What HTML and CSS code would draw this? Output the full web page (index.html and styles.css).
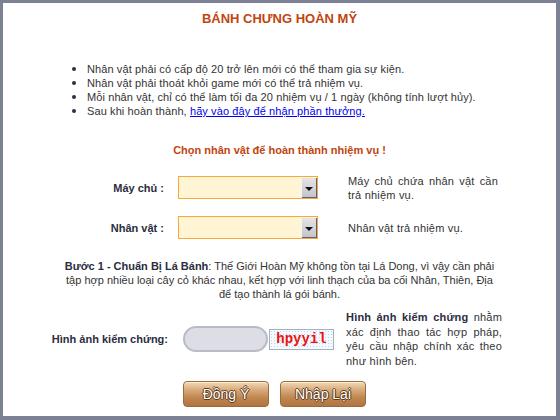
FILE: index.html
```html
<!DOCTYPE html>
<html lang="vi">
<head>
  <meta charset="UTF-8">
  <meta name="viewport" content="width=device-width, initial-scale=1.0">
  <title>Bánh Chưng Hoàn Mỹ</title>
  <link rel="stylesheet" href="styles.css">
</head>
<body>

  <div class="frame">
    <h1 class="title">BÁNH CHƯNG HOÀN MỸ</h1>

    <ul class="rules">
      <li>Nhân vật phải có cấp độ 20 trở lên mới có thể tham gia sự kiện.</li>
      <li>Nhân vật phải thoát khỏi game mới có thể trả nhiệm vụ.</li>
      <li>Mỗi nhân vật, chỉ có thể làm tối đa 20 nhiệm vụ / 1 ngày (không tính lượt hủy).</li>
      <li>Sau khi hoàn thành, <a href="#">hãy vào đây để nhận phần thưởng.</a></li>
    </ul>

    <h2 class="pick">Chọn nhân vật để hoàn thành nhiệm vụ !</h2>

    <div class="form-grid">
      <label class="label" for="server">Máy chủ :</label>
      <div class="combo" id="server"><span class="arrow"></span></div>
      <p class="hint">Máy chủ chứa nhân vật cần trả nhiệm vụ.</p>

      <label class="label" for="char">Nhân vật :</label>
      <div class="combo" id="char"><span class="arrow"></span></div>
      <p class="hint">Nhân vật trả nhiệm vụ.</p>
    </div>

    <p class="step"><b>Bước 1 - Chuẩn Bị Lá Bánh</b>: Thế Giới Hoàn Mỹ không tồn tại Lá Dong, vì vậy cần phải tập hợp nhiều loại cây cỏ khác nhau, kết hợp với linh thạch của ba cối Nhân, Thiên, Địa để tạo thành lá gói bánh.</p>

    <div class="captcha-row">
      <label class="label" for="code">Hình ảnh kiểm chứng:</label>
      <div class="captcha">
        <input type="text" id="code" class="pill">
        <span class="captcha-img">hpyyil</span>
      </div>
      <p class="hint hint-long"><b>Hình ảnh kiểm chứng</b> nhằm xác định thao tác hợp pháp, yêu cầu nhập chính xác theo như hình bên.</p>
    </div>

    <div class="buttons">
      <button class="btn">Đồng Ý</button>
      <button class="btn">Nhập Lại</button>
    </div>
  </div>

</body>
</html>
```

FILE: styles.css
```css
body {
  margin: 0;
  font-family: "Liberation Sans", Arial, sans-serif;
  font-size: 11px;
  color: #333;
  background-color: #fff;
}

.frame {
  width: 560px;
  height: 420px;
  box-sizing: border-box;
  border-style: solid;
  border-color: #7d8196;
  border-width: 3px 4px 4px 3px;
  padding-top: 9px;
}

.title {
  margin: 0;
  text-align: center;
  font-size: 13px;
  line-height: 14px;
  color: #c1450f;
}

.rules {
  margin: 36px 0 0;
  padding-left: 84px;
  line-height: 14px;
  letter-spacing: 0.1px;
}

.rules li {
  color: #333;
}

.rules li::marker {
  color: #2c2f45;
  font-size: 13px;
}

.rules a {
  color: #0000ee;
}

.pick {
  margin: 25px 0 0;
  text-align: center;
  font-size: 11px;
  line-height: 14px;
  color: #c1450f;
}

.form-grid {
  display: grid;
  grid-template-columns: 161px 140px 166px;
  grid-template-rows: 23px 23px;
  column-gap: 14px;
  row-gap: 17px;
  align-items: center;
  margin-top: 19px;
}

.form-grid .hint {
  margin-left: 16px;
}

.label {
  text-align: right;
  font-weight: bold;
  color: #2b2d40;
}

.combo {
  position: relative;
  height: 23px;
  box-sizing: border-box;
  border: 1px solid #f4a93a;
  background-color: #fff4d3;
}

.arrow {
  position: absolute;
  top: 1px;
  right: 0;
  bottom: 0;
  width: 15px;
  background: linear-gradient(#e4e4e8, #c2c2c8);
  border-left: 1px solid #f4f4f6;
  box-shadow: inset -1px -1px 0 #5d6079;
}

.arrow::after {
  content: "";
  position: absolute;
  left: 3px;
  top: 9px;
  border-left: 4px solid transparent;
  border-right: 4px solid transparent;
  border-top: 4px solid #111;
}

.hint {
  margin: 0;
  line-height: 14px;
  text-align: justify;
  letter-spacing: 0.2px;
  color: #333;
}

.step {
  width: 440px;
  margin: 20px auto 0;
  text-align: center;
  line-height: 14px;
  color: #333;
}

.step b {
  color: #2b2d40;
}

.captcha-row {
  display: grid;
  grid-template-columns: 165px 151px 153px;
  column-gap: 15px;
  align-items: center;
  margin-top: 9px;
}

.captcha-row .hint {
  margin-left: -3px;
}

.captcha {
  display: flex;
  align-items: center;
  gap: 1px;
}

.pill {
  width: 85px;
  height: 26px;
  box-sizing: border-box;
  border: 2px solid #b9bbc7;
  border-radius: 13px;
  background-color: #dcdde5;
  padding: 0 8px;
}

.captcha-img {
  width: 65px;
  height: 21px;
  box-sizing: border-box;
  border: 1px solid #a6b0bd;
  background-color: #f4faff;
  background-image: radial-gradient(#b9d6ef 0.8px, transparent 1px);
  background-size: 3px 3px;
  font-family: "Liberation Mono", "Courier New", monospace;
  font-size: 14px;
  font-weight: bold;
  line-height: 19px;
  text-align: center;
  color: #ee1111;
}

.hint-long {
  line-height: 14.5px;
}

.hint b {
  color: #2b2d40;
}

.buttons {
  display: flex;
  justify-content: center;
  gap: 11px;
  margin-top: 13px;
  margin-left: -10px;
}

.btn {
  width: 86px;
  height: 26px;
  border: 1px solid #9a6b3e;
  border-radius: 4px;
  background: linear-gradient(#f1d9b8 0%, #d7a877 35%, #c08650 65%, #b07440 100%);
  box-shadow: inset 0 1px 0 #fbeedd;
  font-family: "Liberation Sans", Arial, sans-serif;
  font-size: 14px;
  color: #fff;
  text-shadow: 1px 0 0 #5b3a1c, -1px 0 0 #5b3a1c, 0 1px 0 #5b3a1c, 0 -1px 0 #5b3a1c;
  cursor: pointer;
}
```
